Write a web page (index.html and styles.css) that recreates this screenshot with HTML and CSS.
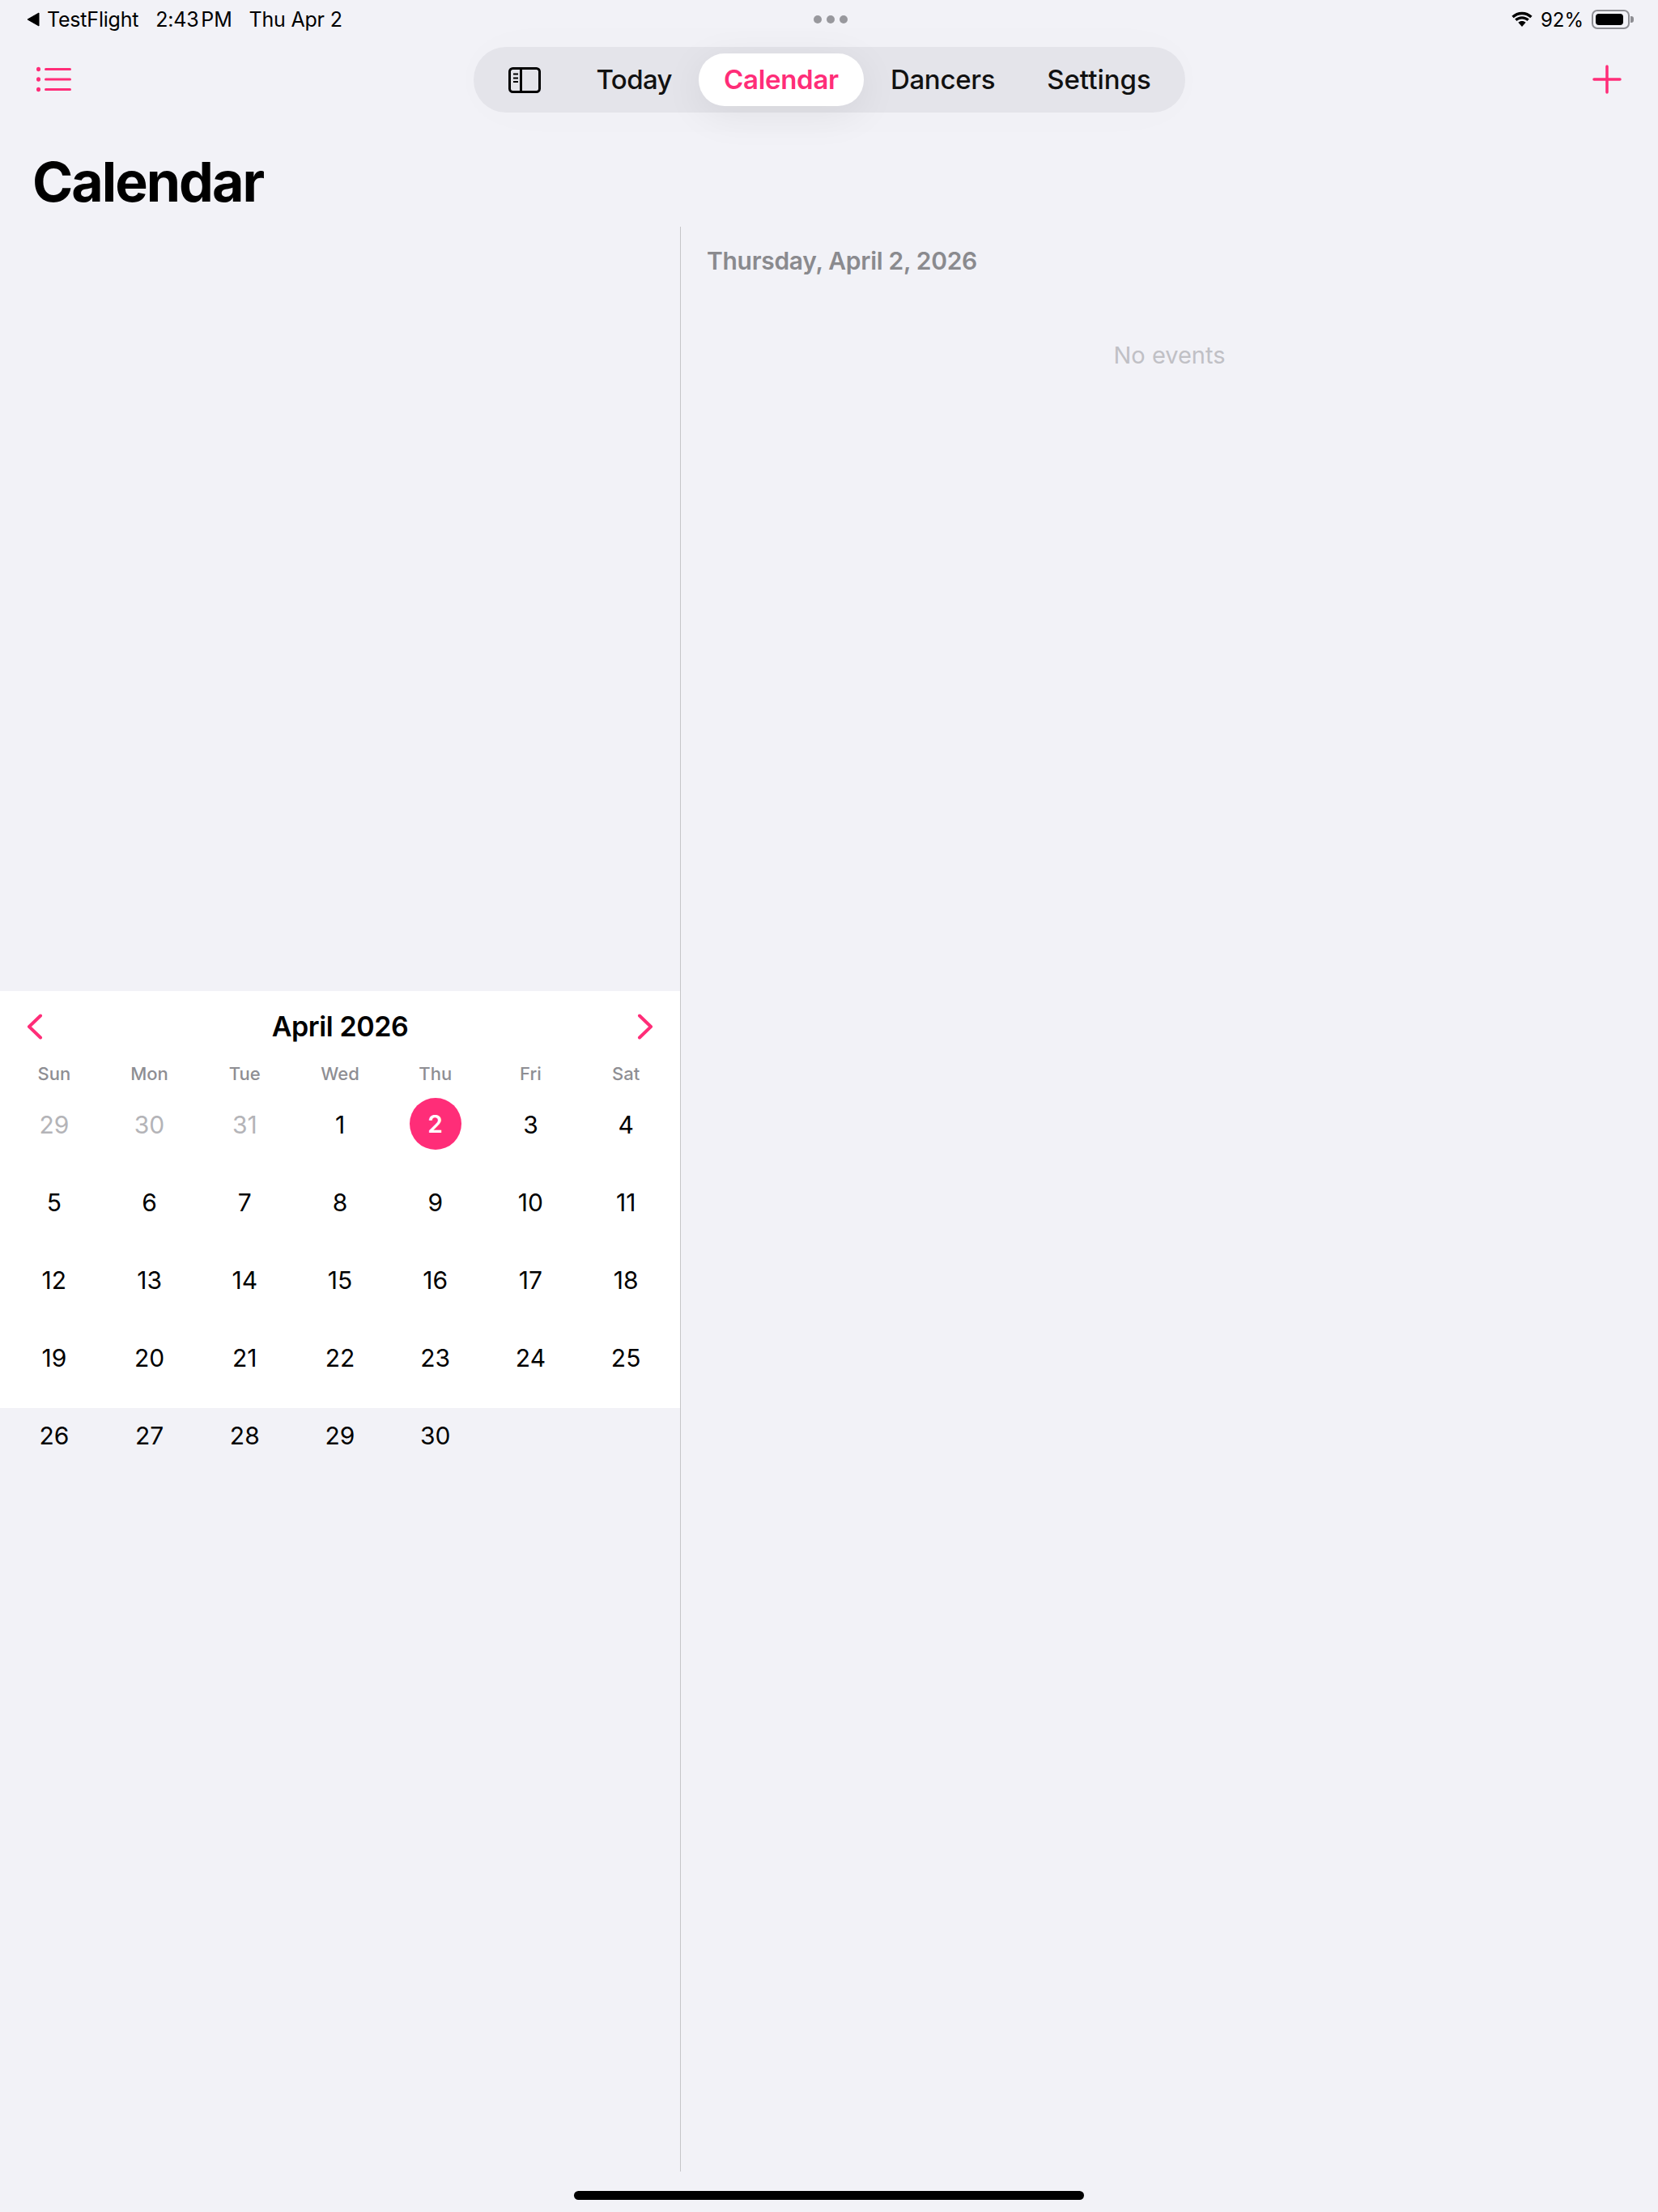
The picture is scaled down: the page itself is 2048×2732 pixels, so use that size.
FILE: index.html
```html
<!DOCTYPE html>
<html lang="en">
  <head>
    <meta charset="UTF-8" />
    <meta name="viewport" content="width=device-width, initial-scale=1.0" />
    <title>Calendar</title>
    <link rel="stylesheet" href="styles.css">
  </head>
  <body>
    <div class="status-bar">
      <div class="status-left">
        <span class="back-app"><svg class="back-arrow" width="16" height="20" viewBox="0 0 16 20"><path d="M15 2v16L1 10z" fill="#000" stroke="#000" stroke-width="1" stroke-linejoin="round"/></svg>TestFlight</span>
        <span class="status-time">2:43 PM</span>
        <span>Thu Apr 2</span>
      </div>
      <div class="multitask-dots"><i></i><i></i><i></i></div>
      <div class="status-right">
        <svg width="28" height="20" viewBox="0 0 28 20"><path d="M14 4.200c4 0 7.600 1.600 10.300 4.100l2.300-2.500C23.300 2.700 18.900.8 14 .8S4.700 2.700 1.400 5.800l2.300 2.500C6.400 5.800 10 4.200 14 4.200z"/><path d="M14 9.600c2.500 0 4.800 1 6.500 2.500l2.300-2.500C20.500 7.500 17.400 6.200 14 6.200s-6.500 1.300-8.800 3.400l2.300 2.500c1.700-1.500 4-2.500 6.500-2.500z"/><path d="M14 12c-1.800 0-3.400.7-4.600 1.700L14 19l4.600-5.300C17.400 12.700 15.800 12 14 12z"/></svg>
        <span class="battery-text">92%</span>
        <div class="battery"><div class="battery-level"></div></div>
        <div class="battery-cap"></div>
      </div>
    </div>

    <nav class="top-nav">
      <button class="icon-btn" aria-label="List">
        <svg width="43" height="32" viewBox="0 0 43 32" fill="none" stroke="#ff2d78" stroke-width="3" stroke-linecap="round">
          <path d="M11.500 3.500H41.500M11.500 16H41.500M11.500 28.500H41.500"/>
          <g fill="#ff2d78" stroke="none"><ellipse cx="2.500" cy="3.500" rx="2.500" ry="2.800"/><ellipse cx="2.500" cy="16" rx="2.500" ry="2.800"/><ellipse cx="2.500" cy="28.500" rx="2.500" ry="2.800"/></g>
        </svg>
      </button>
      <div class="tab-pill">
        <div class="tab tab-icon">
          <svg width="40" height="32" viewBox="0 0 40 32" fill="none" stroke="#000" stroke-width="3">
            <rect x="1.500" y="1.500" width="37" height="29" rx="4"/>
            <path d="M15.500 2v28"/>
            <path d="M6 8.500h6M6 13.500h6M6 18h6" stroke-width="2"/>
          </svg>
        </div>
        <div class="tab tab-today">Today</div>
        <div class="tab tab-active">Calendar</div>
        <div class="tab">Dancers</div>
        <div class="tab">Settings</div>
      </div>
      <button class="icon-btn" aria-label="Add">
        <svg width="36" height="36" viewBox="0 0 36 36" fill="none" stroke="#ff2d78" stroke-width="3.500" stroke-linecap="round"><path d="M18 2v32M2 18h32"/></svg>
      </button>
    </nav>

    <h1 class="page-title">Calendar</h1>

    <main class="split">
      <section class="left-panel">
        <div class="calendar">
          <div class="cal-header">
            <svg width="20" height="32" viewBox="0 0 20 32" fill="none" stroke="#ff2d78" stroke-width="4" stroke-linecap="round" stroke-linejoin="round"><path d="M17 2.500L3 16l14 13.500"/></svg>
            <span class="cal-month">April 2026</span>
            <svg width="20" height="32" viewBox="0 0 20 32" fill="none" stroke="#ff2d78" stroke-width="4" stroke-linecap="round" stroke-linejoin="round"><path d="M3 2.500L17 16 3 29.500"/></svg>
          </div>
          <div class="cal-weekdays">
            <span>Sun</span><span>Mon</span><span>Tue</span><span>Wed</span><span>Thu</span><span>Fri</span><span>Sat</span>
          </div>
          <div class="cal-days">
            <div class="day muted">29</div><div class="day muted">30</div><div class="day muted">31</div><div class="day">1</div><div class="day selected"><span>2</span></div><div class="day">3</div><div class="day">4</div>
            <div class="day">5</div><div class="day">6</div><div class="day">7</div><div class="day">8</div><div class="day">9</div><div class="day">10</div><div class="day">11</div>
            <div class="day">12</div><div class="day">13</div><div class="day">14</div><div class="day">15</div><div class="day">16</div><div class="day">17</div><div class="day">18</div>
            <div class="day">19</div><div class="day">20</div><div class="day">21</div><div class="day">22</div><div class="day">23</div><div class="day">24</div><div class="day">25</div>
            <div class="day">26</div><div class="day">27</div><div class="day">28</div><div class="day">29</div><div class="day">30</div>
          </div>
        </div>
      </section>
      <section class="right-panel">
        <h2 class="selected-date">Thursday, April 2, 2026</h2>
        <p class="no-events">No events</p>
      </section>
    </main>

    <div class="home-indicator"></div>
  </body>
</html>
```

FILE: styles.css
```css
* {
  box-sizing: border-box;
  font-family: "Inter", "Noto Sans", sans-serif;
}
body {
  margin: 0;
  height: 2732px;
  overflow: hidden;
  background-color: #f2f2f7;
  color: #000;
}
.status-bar {
  height: 48px;
  padding: 0 30px 0 33px;
  display: grid;
  grid-template-columns: 1fr auto 1fr;
  align-items: center;
  font-size: 24px;
}
.status-left {
  display: flex;
  gap: 21px;
  font-size: 25px;
  letter-spacing: -0.2px;
}
.status-time {
  word-spacing: -4px;
}
.back-app {
  display: flex;
  align-items: center;
  gap: 9px;
}
.multitask-dots {
  display: flex;
  gap: 6px;
}
.multitask-dots i {
  width: 10px;
  height: 10px;
  border-radius: 50%;
  background-color: #98989d;
}
.status-right {
  display: flex;
  align-items: center;
  justify-content: flex-end;
}
.battery-text {
  margin: 0 10px 0 9px;
}
.battery {
  width: 47px;
  height: 24px;
  padding: 3px;
  border: solid 2px #8e8e93;
  border-radius: 7px;
}
.battery-level {
  width: 92%;
  height: 100%;
  background-color: #000;
  border-radius: 4px;
}
.battery-cap {
  width: 4px;
  height: 8px;
  margin-left: 1px;
  background-color: #8e8e93;
  border-radius: 0 3px 3px 0;
}
.top-nav {
  margin-top: 10px;
  padding: 0 45px;
  display: grid;
  grid-template-columns: 1fr auto 1fr;
  align-items: center;
}
.icon-btn {
  margin-bottom: 2px;
  padding: 0;
  border: none;
  background: none;
  display: flex;
}
.icon-btn:last-child {
  justify-self: end;
}
.tab-pill {
  width: 879px;
  height: 81px;
  padding: 0 8px;
  display: flex;
  align-items: center;
  gap: 2px;
  border-radius: 40px;
  background-color: #e4e4ea;
  box-shadow: 0 0 70px rgba(0, 0, 0, 0.015);
}
.tab {
  height: 65px;
  padding: 0 31px 2px;
  display: flex;
  align-items: center;
  font-size: 33px;
  font-weight: 500;
  letter-spacing: -0.3px;
  border-radius: 32px;
  color: #111;
}
.tab:last-child {
  letter-spacing: 0;
}
.tab-icon {
  width: 111px;
  padding: 0;
  justify-content: center;
}
.tab-today {
  letter-spacing: -0.6px;
}
.tab-active {
  font-weight: 600;
  color: #ff2d78;
  background-color: #fff;
  box-shadow: 0 10px 50px rgba(0, 0, 0, 0.07);
}
.page-title {
  margin: 45px 0 16px;
  padding-left: 40px;
  font-size: 68px;
  line-height: 80px;
  font-weight: 700;
  letter-spacing: -2px;
}
.split {
  height: 2402px;
  display: flex;
}
.left-panel {
  width: 841px;
  padding-top: 944px;
  border-right: solid 1px #c6c6c8;
}
.calendar {
  height: 515px;
  padding: 24px 8px 0;
  background-color: #fff;
}
.cal-header {
  height: 40px;
  padding: 0 25px;
  display: flex;
  align-items: center;
  justify-content: space-between;
}
.cal-month {
  font-size: 34px;
  font-weight: 600;
  letter-spacing: -0.4px;
  margin-top: -1px;
}
.cal-weekdays {
  height: 27px;
  margin-top: 24px;
  display: grid;
  grid-template-columns: repeat(7, 1fr);
  align-items: center;
  text-align: center;
  font-size: 22px;
  font-weight: 500;
  color: #8e8e93;
}
.cal-days {
  padding-top: 2px;
  display: grid;
  grid-template-columns: repeat(7, 1fr);
  grid-auto-rows: 96px;
  align-items: center;
  justify-items: center;
  font-size: 30px;
}
.day.muted {
  color: #b4b4b8;
}
.day.selected span {
  width: 64px;
  height: 64px;
  margin-bottom: 2px;
  display: flex;
  align-items: center;
  justify-content: center;
  border-radius: 50%;
  color: #fff;
  font-weight: 600;
  background-color: #ff2d78;
}
.right-panel {
  flex: 1;
  padding: 22px 32px 0;
}
.selected-date {
  margin: 0;
  font-size: 30px;
  line-height: 40px;
  font-weight: 600;
  letter-spacing: -0.3px;
  color: #8a8a8e;
}
.no-events {
  margin: 0;
  padding-top: 77px;
  font-size: 29px;
  line-height: 40px;
  text-align: center;
  color: #c0c0c5;
}
.home-indicator {
  width: 630px;
  height: 11px;
  margin: 24px auto 0;
  background-color: #000;
  border-radius: 6px;
}
```
